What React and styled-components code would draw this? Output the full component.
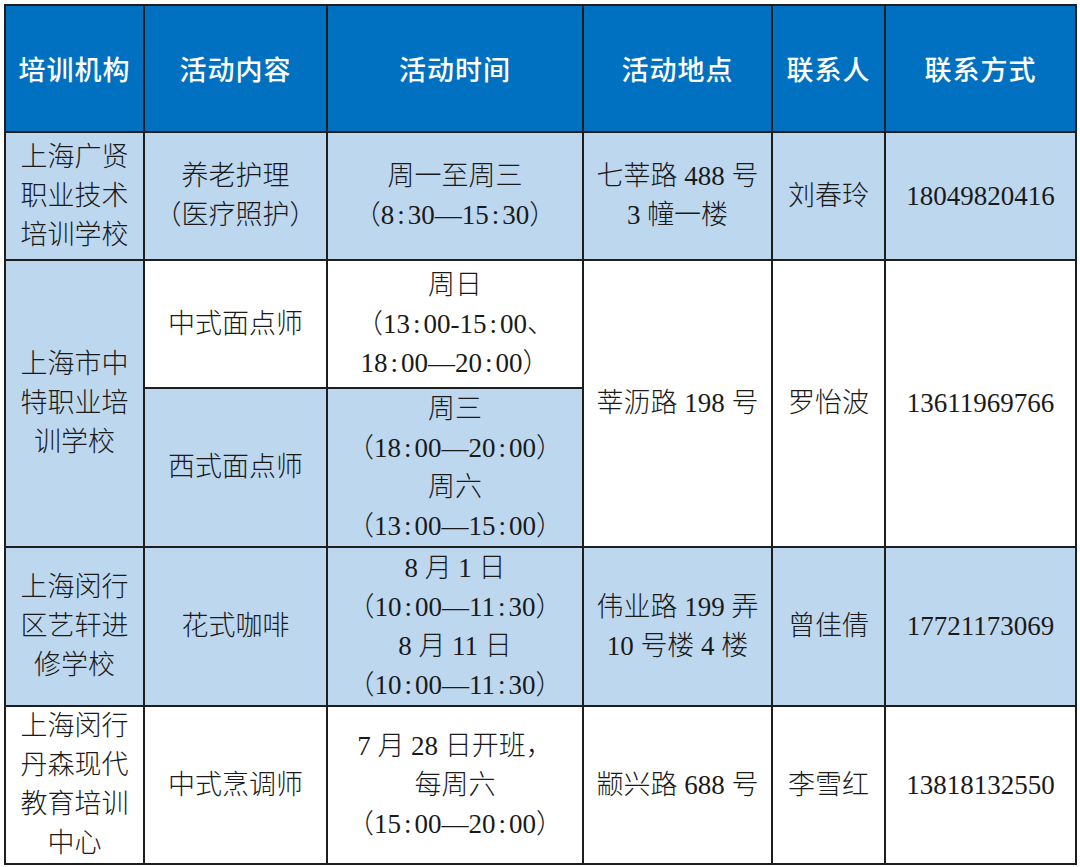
import React from 'react';
import styled, { createGlobalStyle } from 'styled-components';

const GlobalStyle = createGlobalStyle`
    html, body {
        margin: 0;
        padding: 0;
        background: #ffffff;
    }
`

const Page = styled.div`
    padding: 4px 0 0 4px;
    width: 1080px;
    height: 867px;
    box-sizing: border-box;
    background: #ffffff;
`

const Table = styled.table`
    border-collapse: collapse;
    table-layout: fixed;
    width: 1071px;
`

const Row = styled.tr`
    height: ${props => props.$h}px;
`

const HeadCell = styled.th`
    background: #0070c0;
    color: #ffffff;
    border: 2px solid #1e1e1e;
    font-family: "Noto Sans CJK SC", "Noto Sans", sans-serif;
    font-size: 27px;
    font-weight: 500;
    text-align: center;
    vertical-align: middle;
    padding: 0;
    letter-spacing: 1px;
`

const Cell = styled.td`
    background: ${props => props.$blue ? '#bdd7ee' : '#ffffff'};
    color: #1a1a1a;
    border: 2px solid #1e1e1e;
    font-family: "Liberation Serif", "Noto Sans CJK SC", serif;
    font-size: 27px;
    font-weight: 300;
    line-height: 39px;
    text-align: center;
    vertical-align: middle;
    padding: 0 2px;
    white-space: nowrap;
`

// the original font gives the colon a half-em advance
const Colon = styled.span`
    margin: 0 3px;
`

const withColons = t => {
    const parts = t.split(':')
    return parts.map((p, i) => (
        <React.Fragment key={i}>
            {i > 0 && <Colon>:</Colon>}
            {p}
        </React.Fragment>
    ))
}

const Lines = ({ items }) => (
    <>
        {items.map((t, i) => (
            <React.Fragment key={i}>
                {i > 0 && <br />}
                {withColons(t)}
            </React.Fragment>
        ))}
    </>
)

const heads = ['培训机构', '活动内容', '活动时间', '活动地点', '联系人', '联系方式']
const widths = [139, 183, 256, 189, 113, 191]

function App() {
    return (
        <Page>
            <GlobalStyle />
            <Table>
                <colgroup>
                    {widths.map((w, i) => <col key={i} style={{ width: w }} />)}
                </colgroup>
                <tbody>
                    <Row $h={127}>
                        {heads.map(h => <HeadCell key={h}>{h}</HeadCell>)}
                    </Row>

                    <Row $h={128}>
                        <Cell $blue><Lines items={['上海广贤', '职业技术', '培训学校']} /></Cell>
                        <Cell $blue><Lines items={['养老护理', '（医疗照护）']} /></Cell>
                        <Cell $blue><Lines items={['周一至周三', '（8:30—15:30）']} /></Cell>
                        <Cell $blue><Lines items={['七莘路 488 号', '3 幢一楼']} /></Cell>
                        <Cell $blue>刘春玲</Cell>
                        <Cell $blue>18049820416</Cell>
                    </Row>

                    <Row $h={128}>
                        <Cell $blue rowSpan={2}><Lines items={['上海市中', '特职业培', '训学校']} /></Cell>
                        <Cell>中式面点师</Cell>
                        <Cell><Lines items={['周日', '（13:00-15:00、', '18:00—20:00）']} /></Cell>
                        <Cell rowSpan={2}>莘沥路 198 号</Cell>
                        <Cell rowSpan={2}>罗怡波</Cell>
                        <Cell rowSpan={2}>13611969766</Cell>
                    </Row>
                    <Row $h={159}>
                        <Cell $blue>西式面点师</Cell>
                        <Cell $blue><Lines items={['周三', '（18:00—20:00）', '周六', '（13:00—15:00）']} /></Cell>
                    </Row>

                    <Row $h={159}>
                        <Cell $blue><Lines items={['上海闵行', '区艺轩进', '修学校']} /></Cell>
                        <Cell $blue>花式咖啡</Cell>
                        <Cell $blue><Lines items={['8 月 1 日', '（10:00—11:30）', '8 月 11 日', '（10:00—11:30）']} /></Cell>
                        <Cell $blue><Lines items={['伟业路 199 弄', '10 号楼 4 楼']} /></Cell>
                        <Cell $blue>曾佳倩</Cell>
                        <Cell $blue>17721173069</Cell>
                    </Row>

                    <Row $h={158}>
                        <Cell><Lines items={['上海闵行', '丹森现代', '教育培训', '中心']} /></Cell>
                        <Cell>中式烹调师</Cell>
                        <Cell><Lines items={['7 月 28 日开班，', '每周六', '（15:00—20:00）']} /></Cell>
                        <Cell>颛兴路 688 号</Cell>
                        <Cell>李雪红</Cell>
                        <Cell>13818132550</Cell>
                    </Row>
                </tbody>
            </Table>
        </Page>
    );
}

export default App
